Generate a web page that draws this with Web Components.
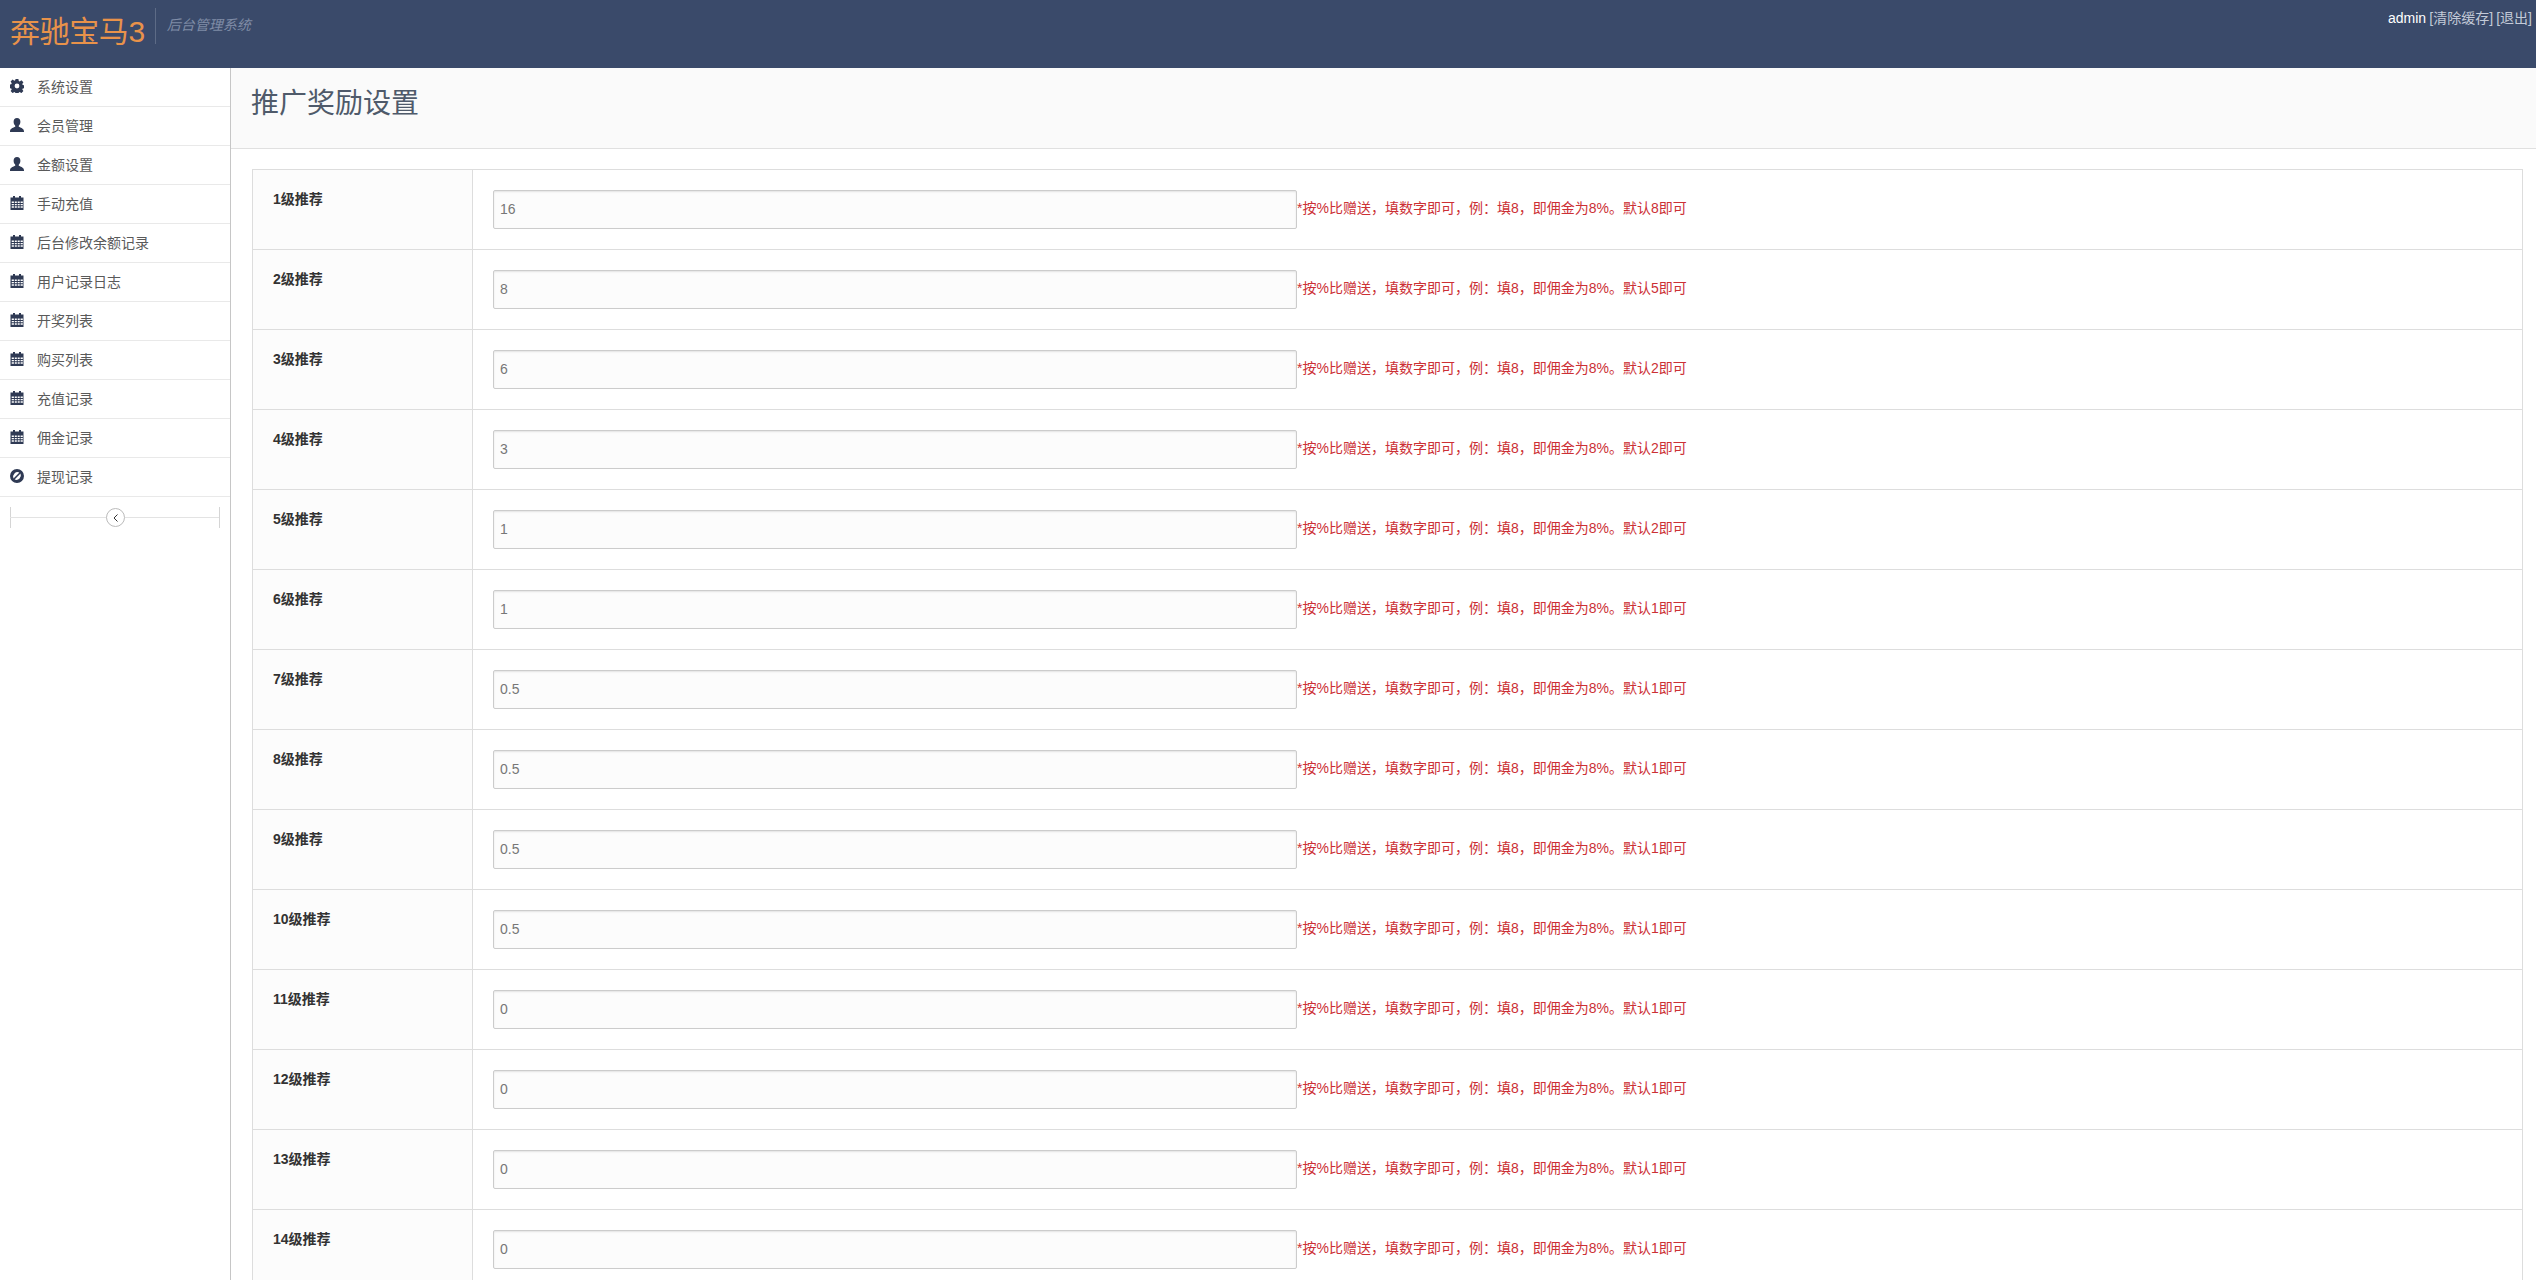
<!DOCTYPE html>
<html lang="zh"><head><meta charset="utf-8"><title>推广奖励设置</title>
<style>
html,body{margin:0;height:100%;overflow:hidden;background:#fff}
body{font:14px/1.5 "Liberation Sans","Noto Sans CJK SC",sans-serif;color:#555;display:flex;flex-direction:column}
.main{display:flex;flex:1;min-height:0}
</style></head><body>
<template id="t-header"><style>
:host{display:flex;flex:none;height:68px;background:#3a4a6a;box-sizing:border-box;justify-content:space-between}
.brand{display:flex;align-items:flex-start}
.logo{font-size:30px;line-height:36px;color:#e8924a;margin:14px 0 0 10px;letter-spacing:-.4px}
.div{width:1px;height:36px;background:#5d6b86;margin:8px 11px 0 10px}
.sub{font-style:italic;color:#7f8ca6;line-height:20px;margin-top:15px}
.user{color:#fff;line-height:20px;margin:8px 4px 0 0;word-spacing:-.7px}
.user span{color:#c3cad8}
</style><div class="brand"><div class="logo">奔驰宝马3</div><div class="div"></div><div class="sub">后台管理系统</div></div>
<div class="user">admin <span>[清除缓存] [退出]</span></div></template>

<template id="t-nav"><style>
:host{display:block;flex:none;width:231px;box-sizing:border-box;border-right:1px solid #c6c6c6;background:#fff}
.wrap{position:relative;height:44px;margin:0 10px}
.line{position:absolute;left:0;right:0;top:20px;height:1px;background:#e3e3e3}
.wrap::before,.wrap::after{content:"";position:absolute;top:10px;height:21px;width:1px;background:#d5d5d5}
.wrap::before{left:0}.wrap::after{right:0}
.btn{position:absolute;left:96px;top:11px;width:17px;height:17px;border-radius:50%;border:1px solid #bbb;background:#fff;display:flex;align-items:center;justify-content:center}
</style><slot></slot><div class="wrap"><div class="line"></div><div class="btn"><svg width="8" height="10" viewBox="0 0 8 10"><path d="M5.500 1.500 2 5l3.500 3.500" fill="none" stroke="#333" stroke-width="1"/></svg></div></div></template>

<template id="t-item"><style>
:host{display:flex;align-items:center;height:39px;box-sizing:border-box;border-bottom:1px solid #e9e9e9;padding-left:10px;color:#5a5a5a}
svg{width:14px;height:14px;flex:none;fill:#2f3a54;margin-right:13px;position:relative;top:-1px}
</style><svg viewBox="0 0 14 14"></svg><slot></slot></template>

<template id="t-title"><style>
:host{display:block;flex:none;height:81px;box-sizing:border-box;background:#fafafa;border-bottom:1px solid #e0e0e0;padding:16px 0 0 20px;font-size:28px;line-height:40px;color:#4f5a6a}
</style><slot></slot></template>

<template id="t-table"><style>
:host{display:block;margin:20px 13px 0 21px;border:1px solid #ddd;border-bottom:0}
</style><slot></slot></template>

<template id="t-row"><style>
:host{display:grid;grid-template-columns:220px 1fr;height:80px;box-sizing:border-box;border-bottom:1px solid #ddd}
.l{background:#fcfcfc;border-right:1px solid #ddd;padding:19px 0 0 20px;font-weight:bold;color:#333;line-height:20px}
.r{display:flex;align-items:flex-start;padding:20px 0 0 20px}
.in{width:804px;height:39px;box-sizing:border-box;flex:none;border:1px solid #ccc;border-radius:2px;background:#fcfcfc;box-shadow:inset 0 1px 2px rgba(0,0,0,.1);padding:0 6px;line-height:37px;color:#777}
.h{color:#cc3035;line-height:36px;white-space:nowrap}
</style><div class="l"><slot name="label"></slot></div><div class="r"><div class="in"><slot name="value"></slot></div><div class="h"><slot name="hint"></slot></div></div></template>

<app-header></app-header>
<div class="main">
<side-nav>
<nav-item icon="cog">系统设置</nav-item><nav-item icon="user">会员管理</nav-item><nav-item icon="user">金额设置</nav-item><nav-item icon="cal">手动充值</nav-item><nav-item icon="cal">后台修改余额记录</nav-item><nav-item icon="cal">用户记录日志</nav-item><nav-item icon="cal">开奖列表</nav-item><nav-item icon="cal">购买列表</nav-item><nav-item icon="cal">充值记录</nav-item><nav-item icon="cal">佣金记录</nav-item><nav-item icon="ban">提现记录</nav-item>
</side-nav>
<content-area id="content"></content-area>
</div>
<script>
const tpl=id=>document.getElementById(id).content.cloneNode(true);
const icons={
cog:'<path fill-rule="evenodd" d="M5.600 0h2.800l.4 2 .9.4 1.700-1.100 2 2-1.100 1.700.4.9 2 .4v2.800l-2 .4-.4.9 1.100 1.700-2 2-1.700-1.100-.9.4-.4 2H5.600l-.4-2-.9-.4-1.700 1.100-2-2 1.100-1.700-.4-.9-2-.4V5.600l2-.4.4-.9-1.100-1.700 2-2 1.700 1.100.9-.4zM7 4.600a2.400 2.400 0 1 0 0 4.800 2.400 2.400 0 0 0 0-4.800z"/>',
user:'<path d="M7 0c2.200 0 3.400 1.600 3.400 3.700 0 1.500-.6 3-1.500 3.800-.3.3-.3 1 0 1.300.8.8 5.100 1.300 5.100 4.500V14H0v-.7c0-3.200 4.300-3.700 5.100-4.500.3-.3.3-1 0-1.300-.9-.8-1.500-2.300-1.500-3.800C3.600 1.600 4.800 0 7 0z"/>',
cal:'<path fill-rule="evenodd" d="M3 0h2v1.500h4V0h2v1.500h2.500V14H.5V1.500H3zM1.700 5.500v1.400h2.200V5.500zm3.100 0v1.400h2V5.500zm2.900 0v1.400h2V5.500zm2.900 0v1.400h2.200V5.500zM1.700 7.900v1.400h2.200V7.900zm3.100 0v1.400h2V7.900zm2.900 0v1.400h2V7.900zm2.900 0v1.400h2.200V7.900zM1.700 10.300v1.400h2.200v-1.400zm3.100 0v1.400h2v-1.400zm2.900 0v1.400h2v-1.400zm2.900 0v1.400h2.200v-1.400z"/>',
ban:'<path fill-rule="evenodd" d="M7 0a7 7 0 1 1 0 14A7 7 0 0 1 7 0zM3.500 9.400l5.900-5.900A4.500 4.500 0 0 0 3.500 9.400zm1.100 1.100a4.500 4.500 0 0 0 5.900-5.900z"/>'};
class Base extends HTMLElement{constructor(t){super();this.attachShadow({mode:'open'}).append(tpl(t))}}
customElements.define('app-header',class extends Base{constructor(){super('t-header')}});
customElements.define('side-nav',class extends Base{constructor(){super('t-nav')}});
customElements.define('nav-item',class extends Base{constructor(){super('t-item')}
 connectedCallback(){this.shadowRoot.querySelector('svg').innerHTML=icons[this.getAttribute('icon')]}});
customElements.define('page-title',class extends Base{constructor(){super('t-title')}});
customElements.define('form-table',class extends Base{constructor(){super('t-table')}});
customElements.define('form-row',class extends Base{constructor(){super('t-row')}});
customElements.define('content-area',class extends HTMLElement{constructor(){super();
 const s=this.attachShadow({mode:'open'});
 const vals=['16','8','6','3','1','1','0.5','0.5','0.5','0.5','0','0','0','0'];
 const defs=[8,5,2,2,2,1,1,1,1,1,1,1,1,1];
 s.innerHTML='<style>:host{display:flex;flex-direction:column;flex:1;min-width:0;min-height:0;overflow:hidden}</style><page-title>推广奖励设置</page-title><form-table>'+
 vals.map((v,i)=>`<form-row><span slot="label">${i+1}级推荐</span><span slot="value">${v}</span><span slot="hint">*按%比赠送，填数字即可，例：填8，即佣金为8%。默认${defs[i]}即可</span></form-row>`).join('')+'</form-table>';
}});
</script>
</body></html>
